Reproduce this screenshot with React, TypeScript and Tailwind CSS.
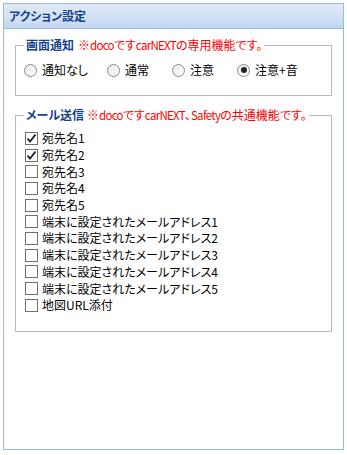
import React from "react";

const font = "[font-family:'Noto_Sans_CJK_JP',sans-serif] [font-feature-settings:'palt']";

function Radio({ checked }: { checked?: boolean }) {
  return (
    <span className="relative flex h-[13px] w-[13px] shrink-0 items-center justify-center rounded-full border border-[#8a8a8a] bg-gradient-to-br from-[#e9e9e9] to-white">
      {checked && <span className="h-[6px] w-[6px] rounded-full bg-[#222]" />}
    </span>
  );
}

function Check({ checked }: { checked?: boolean }) {
  return (
    <span className="flex h-[13px] w-[13px] shrink-0 items-center justify-center border border-[#6f6f6f] bg-white">
      {checked && (
        <svg width="11" height="11" viewBox="0 0 11 11">
          <path d="M1.5 5.5 L4 8.5 L9.5 1.5" fill="none" stroke="#1a1a2a" strokeWidth="1.8" />
        </svg>
      )}
    </span>
  );
}

function L({ children }: { children: React.ReactNode }) {
  return <span className="text-[11.5px] tracking-[-0.7px]">{children}</span>;
}

export default function App() {
  const radios = [
    { label: "通知なし", w: "w-[83px]" },
    { label: "通常", w: "w-[65px]" },
    { label: "注意", w: "w-[65px]" },
    { label: "注意+音", w: "w-[80px]", checked: true },
  ];
  const checks: { label: string; checked?: boolean }[] = [
    { label: "宛先名1", checked: true },
    { label: "宛先名2", checked: true },
    { label: "宛先名3" },
    { label: "宛先名4" },
    { label: "宛先名5" },
    { label: "端末に設定されたメールアドレス1" },
    { label: "端末に設定されたメールアドレス2" },
    { label: "端末に設定されたメールアドレス3" },
    { label: "端末に設定されたメールアドレス4" },
    { label: "端末に設定されたメールアドレス5" },
    { label: "地図URL添付" },
  ];
  return (
    <div className={`p-[3px] bg-white text-[12px] leading-[16px] text-black ${font}`}>
      <div className="flex h-[447px] w-[341px] flex-col border border-[#99bbe8]">
        <div className="flex h-[25px] items-center border-b border-[#99bbe8] bg-gradient-to-b from-[#e0e9f6] via-[#d4e2f4] to-[#c3d5ef] pl-[5px] font-bold text-[#15428b]">
          アクション設定
        </div>
        <div className="flex flex-col px-[11px] pt-[8px]">
          <fieldset className="border border-[#b5b8c8] pl-[8px] pt-[9px] pb-[17px]">
            <legend className="px-[2px] leading-[16px]">
              <span className="font-bold text-[#15428b]">画面通知</span>
              <span className="ml-[4px] text-[#ff0000]">
                ※<L>doco</L>です<L>carNEXT</L>の専用機能です。
              </span>
            </legend>
            <div className="flex h-[16px] items-center">
              {radios.map((r) => (
                <label key={r.label} className={`flex items-center gap-[5px] ${r.w}`}>
                  <Radio checked={r.checked} />
                  <span>{r.label}</span>
                </label>
              ))}
            </div>
          </fieldset>
          <fieldset className="mt-[11px] border border-[#b5b8c8] pl-[9px] pt-[7px] pb-[17px]">
            <legend className="ml-[-1px] px-[2px] leading-[16px]">
              <span className="font-bold text-[#15428b]">メール送信</span>
              <span className="ml-[3px] text-[#ff0000]">
                ※<L>doco</L>です<L>carNEXT</L>、<L>Safety</L>の共通機能です。
              </span>
            </legend>
            <div className="flex flex-col">
              {checks.map((c) => (
                <label key={c.label} className="flex h-[16.7px] items-center gap-[4px]">
                  <Check checked={c.checked} />
                  <span>{c.label}</span>
                </label>
              ))}
            </div>
          </fieldset>
        </div>
      </div>
    </div>
  );
}
